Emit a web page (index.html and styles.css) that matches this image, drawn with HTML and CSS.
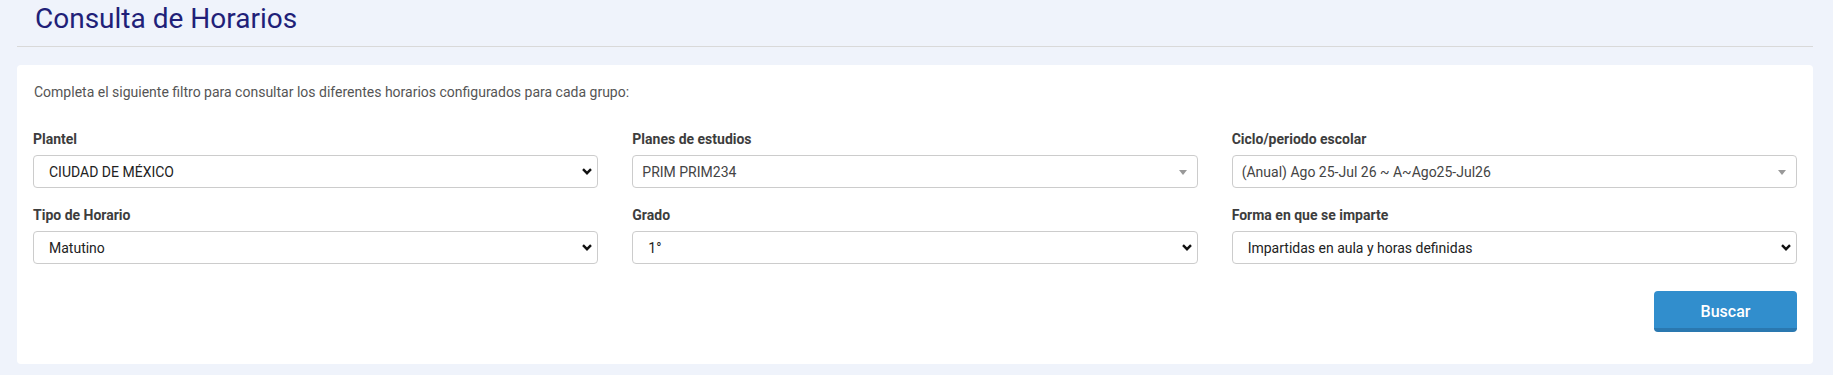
FILE: index.html
```html
<!DOCTYPE html>
<html lang="es">
<head>
    <meta charset="UTF-8">
    <meta name="viewport" content="width=device-width, initial-scale=1.0">
    <title>Consulta de Horarios</title>
    <link rel="stylesheet" href="styles.css">
</head>
<body>
    <div class="page">
        <div class="page-header">
            <h1>Consulta de Horarios</h1>
        </div>

        <div class="card">
            <p class="intro">Completa el siguiente filtro para consultar los diferentes horarios configurados para cada grupo:</p>

            <div class="filters">
                <div class="field">
                    <label for="plantel">Plantel</label>
                    <select id="plantel" class="form-select">
                        <option>CIUDAD DE MÉXICO</option>
                    </select>
                </div>
                <div class="field">
                    <label>Planes de estudios</label>
                    <div class="select2">
                        <span class="select2-text">PRIM PRIM234</span>
                        <span class="select2-arrow"></span>
                    </div>
                </div>
                <div class="field">
                    <label>Ciclo/periodo escolar</label>
                    <div class="select2">
                        <span class="select2-text">(Anual) Ago 25-Jul 26 ~ A~Ago25-Jul26</span>
                        <span class="select2-arrow"></span>
                    </div>
                </div>

                <div class="field">
                    <label for="tipo">Tipo de Horario</label>
                    <select id="tipo" class="form-select">
                        <option>Matutino</option>
                    </select>
                </div>
                <div class="field">
                    <label for="grado">Grado</label>
                    <select id="grado" class="form-select">
                        <option>1°</option>
                    </select>
                </div>
                <div class="field">
                    <label for="forma">Forma en que se imparte</label>
                    <select id="forma" class="form-select">
                        <option>Impartidas en aula y horas definidas</option>
                    </select>
                </div>
            </div>

            <div class="actions">
                <button class="btn-buscar">Buscar</button>
            </div>
        </div>
    </div>
</body>
</html>
```

FILE: styles.css
```css
body {
    margin: 0;
    font-family: 'Roboto', 'Liberation Sans', sans-serif;
    background-color: #eff3fb;
    color: #444;
}

.page {
    padding: 0 20px 0 17px;
}

.page-header {
    padding: 2px 0 10px 18px;
    border-bottom: 1px solid #d9d9d9;
}

h1 {
    margin: 0;
    font-size: 28px;
    line-height: 34px;
    font-weight: 400;
    color: #211f78;
}

.card {
    margin-top: 18px;
    background: white;
    border-radius: 4px;
    padding: 17px 16px 32px 16px;
}

.intro {
    margin: 0 0 27px 1px;
    font-size: 14px;
    line-height: 20px;
    color: #555;
}

.filters {
    display: grid;
    grid-template-columns: repeat(3, 1fr);
    column-gap: 34px;
    row-gap: 17px;
}

.field label {
    display: block;
    font-size: 14px;
    line-height: 20px;
    font-weight: 700;
    color: #3d3d3d;
    margin-bottom: 6px;
}

.form-select {
    display: block;
    width: 100%;
    height: 33px;
    padding: 0 30px 0 15px;
    font-family: inherit;
    font-size: 14px;
    color: #222;
    background-color: white;
    background-image: url("data:image/svg+xml,%3Csvg xmlns='http://www.w3.org/2000/svg' width='10' height='7' viewBox='0 0 10 7'%3E%3Cpath d='M1 1.2 5 5.2 9 1.2' fill='none' stroke='%23111' stroke-width='2.4'/%3E%3C/svg%3E");
    background-repeat: no-repeat;
    background-position: right 5px center;
    background-size: 10px 7px;
    border: 1px solid #ccc;
    border-radius: 4px;
    appearance: none;
    -webkit-appearance: none;
}

.select2 {
    position: relative;
    display: flex;
    align-items: center;
    height: 33px;
    box-sizing: border-box;
    padding: 0 30px 0 9px;
    border: 1px solid #ccc;
    border-radius: 4px;
    background: white;
    font-size: 14px;
    color: #444;
}

.select2-arrow {
    position: absolute;
    right: 10px;
    top: 14px;
    border-style: solid;
    border-width: 5px 4px 0 4px;
    border-color: #999 transparent transparent transparent;
}

.actions {
    display: flex;
    justify-content: flex-end;
    margin-top: 27px;
}

.btn-buscar {
    width: 143px;
    height: 41px;
    background-color: #318ecd;
    color: white;
    border: none;
    border-bottom: 4px solid #2a78b0;
    border-radius: 4px;
    font-family: inherit;
    font-size: 16px;
    font-weight: 500;
    padding-top: 4px;
    cursor: pointer;
}
```
